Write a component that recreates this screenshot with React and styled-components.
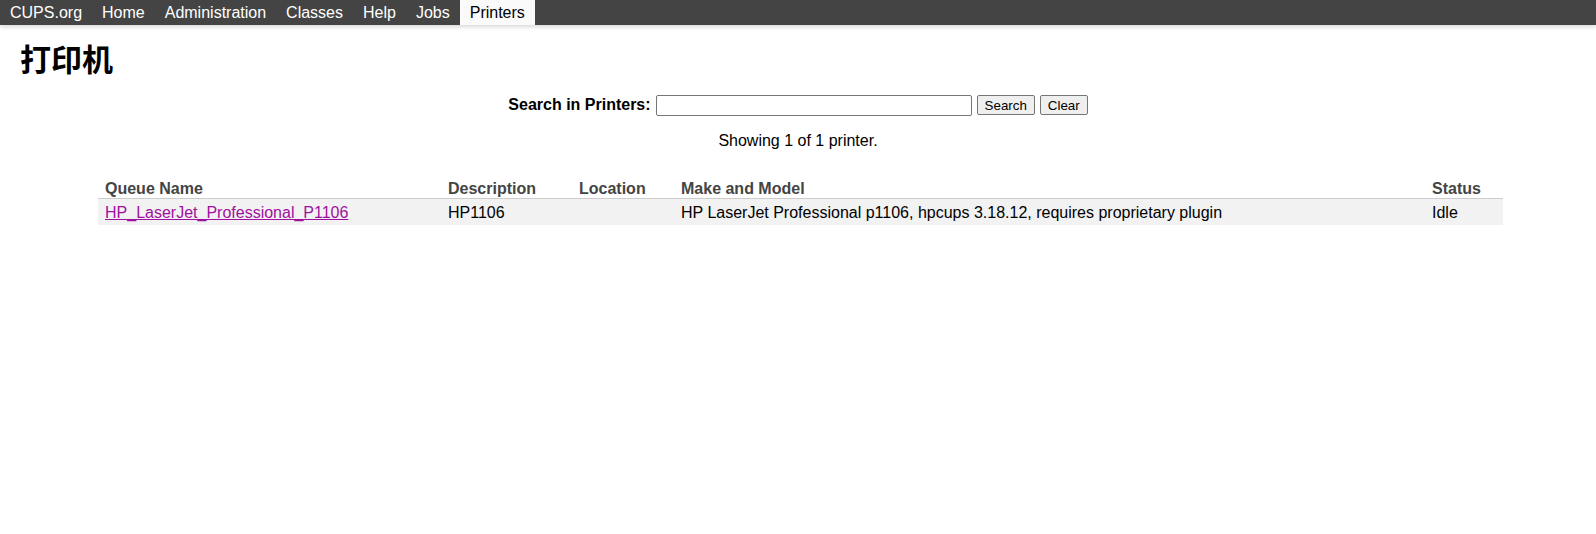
import React, {useState} from 'react';
import styled, {createGlobalStyle} from 'styled-components';

const GlobalStyle = createGlobalStyle`
  html, body {
    margin: 0;
    padding: 0;
    background: #fff;
  }
  body {
    font-family: "Liberation Sans", Arial, "Noto Sans CJK SC", sans-serif;
    font-size: 16px;
    color: #000;
  }
`;

const navItems = ["CUPS.org", "Home", "Administration", "Classes", "Help", "Jobs", "Printers"];

const printers = [
    {
        name: "HP_LaserJet_Professional_P1106",
        description: "HP1106",
        location: "",
        model: "HP LaserJet Professional p1106, hpcups 3.18.12, requires proprietary plugin",
        status: "Idle",
    },
];

const App = () => {

    const [query, setQuery] = useState("");

    const onSubmit = (e) => {
        e.preventDefault();
    }

    return (
        <>
            <GlobalStyle/>
            <Header>
                <Nav>
                    {navItems.map((item) => (
                        <NavLink key={item} href="#" $active={item === "Printers"}>{item}</NavLink>
                    ))}
                </Nav>
            </Header>
            <Body>
                <Title>打印机</Title>
                <SearchForm onSubmit={onSubmit}>
                    <SearchLabel>Search in Printers:</SearchLabel>
                    <SearchInput type="search" value={query} onChange={(e) => setQuery(e.target.value)}/>
                    <Button type="submit">Search</Button>
                    <Button type="button" onClick={() => setQuery("")}>Clear</Button>
                </SearchForm>
                <Summary>Showing 1 of 1 printer.</Summary>
                <List>
                    <colgroup>
                        <Col $w={343}/>
                        <Col $w={131}/>
                        <Col $w={102}/>
                        <Col/>
                        <Col $w={78}/>
                    </colgroup>
                    <thead>
                    <tr>
                        <Th>Queue Name</Th>
                        <Th>Description</Th>
                        <Th>Location</Th>
                        <Th>Make and Model</Th>
                        <Th>Status</Th>
                    </tr>
                    </thead>
                    <tbody>
                    {printers.map((p) => (
                        <Row key={p.name}>
                            <Td><QueueLink href="#">{p.name}</QueueLink></Td>
                            <Td>{p.description}</Td>
                            <Td>{p.location}</Td>
                            <Td>{p.model}</Td>
                            <Td>{p.status}</Td>
                        </Row>
                    ))}
                    </tbody>
                </List>
            </Body>
        </>
    )
}

const Header = styled.div`
  background: #444;
  height: 25px;
  box-shadow: 0 2px 4px rgba(0, 0, 0, 0.15);
`;

const Nav = styled.nav`
  display: flex;
  height: 100%;
`;

const NavLink = styled.a`
  display: flex;
  align-items: center;
  height: 25px;
  padding: 0 10px;
  color: ${p => p.$active ? "#000" : "#fff"};
  background: ${p => p.$active ? "#fafafa" : "transparent"};
  text-decoration: none;
  font-size: 16px;
  line-height: 25px;
`;

const Body = styled.div`
  padding: 0 20px;
`;

const Title = styled.h1`
  margin: 0;
  padding-top: 10px;
  font-family: "Noto Sans CJK SC", "Liberation Sans", sans-serif;
  font-size: 31px;
  font-weight: 700;
  line-height: 45px;
`;

const SearchForm = styled.form`
  display: flex;
  justify-content: center;
  align-items: center;
  gap: 5px;
  margin-top: 13px;
  height: 24px;
`;

const SearchLabel = styled.label`
  font-weight: 700;
  font-size: 16px;
`;

const SearchInput = styled.input`
  width: 316px;
  height: 21px;
  box-sizing: border-box;
  border: 1px solid #767676;
  border-radius: 2px;
  padding: 1px 3px;
  font: 13.33px "Liberation Sans", Arial, sans-serif;
  appearance: none;
`;

const Button = styled.button`
  height: 20px;
  box-sizing: border-box;
  padding: 0 7px;
  border: 1px solid #767676;
  border-radius: 2px;
  background: #efefef;
  color: #000;
  font: 13.33px "Liberation Sans", Arial, sans-serif;
`;

const Summary = styled.p`
  margin: 14px 0 0;
  text-align: center;
  line-height: 20px;
`;

const List = styled.table`
  width: calc(100% - 151px);
  margin: 23px 0 0 78px;
  border-collapse: collapse;
  table-layout: fixed;
`;

const Col = styled.col`
  width: ${p => p.$w ? `${p.$w}px` : "auto"};
`;

const Th = styled.th`
  text-align: left;
  font-weight: 700;
  color: #444;
  padding: 3px 7px 0;
  height: 21px;
  border-bottom: 1px solid #ccc;
  vertical-align: bottom;
`;

const Row = styled.tr`
  background: #f2f2f2;
`;

const Td = styled.td`
  padding: 3px 7px 0;
  height: 26px;
  box-sizing: border-box;
  text-align: left;
  vertical-align: middle;
  white-space: nowrap;
`;

const QueueLink = styled.a`
  color: #a010a0;
  text-decoration: underline;
`;

export default App;
